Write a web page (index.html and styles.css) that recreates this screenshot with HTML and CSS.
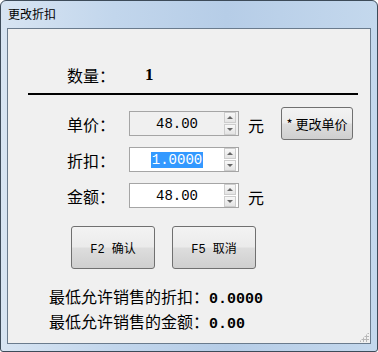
FILE: index.html
```
<!DOCTYPE html>
<html>

<head>
    <title>更改折扣</title>
    <link rel="stylesheet" href="styles.css">
</head>

<body>
    <div class="window">
        <div class="titlebar">更改折扣</div>
        <div class="client">
            <div class="qty-row">
                <span class="label">数量：</span>
                <span class="qty-value">1</span>
            </div>
            <div class="divider"></div>
            <div class="form-grid">
                <span class="label">单价：</span>
                <div class="spin-box disabled">
                    <span class="spin-text">48.00</span>
                    <div class="spin-buttons">
                        <span class="spin-btn up"></span>
                        <span class="spin-btn down"></span>
                    </div>
                </div>
                <span class="unit">元</span>
                <button class="btn change-price">* 更改单价</button>

                <span class="label">折扣：</span>
                <div class="spin-box">
                    <span class="spin-text"><span class="selected">1.0000</span></span>
                    <div class="spin-buttons">
                        <span class="spin-btn up"></span>
                        <span class="spin-btn down"></span>
                    </div>
                </div>
                <span class="unit"></span>
                <span></span>

                <span class="label">金额：</span>
                <div class="spin-box">
                    <span class="spin-text">48.00</span>
                    <div class="spin-buttons">
                        <span class="spin-btn up"></span>
                        <span class="spin-btn down"></span>
                    </div>
                </div>
                <span class="unit">元</span>
                <span></span>
            </div>
            <div class="actions">
                <button class="btn action"><span class="key">F2</span>确认</button>
                <button class="btn action"><span class="key">F5</span>取消</button>
            </div>
            <div class="limits">
                <div class="limit-row">最低允许销售的折扣：<span class="num">0.0000</span></div>
                <div class="limit-row">最低允许销售的金额：<span class="num">0.00</span></div>
            </div>
        </div>
    </div>
</body>

</html>
```

FILE: styles.css
```
body {
    margin: 0;
    width: 378px;
    height: 352px;
    overflow: hidden;
    background-color: #fff;
    font-family: "Noto Sans CJK SC", "Liberation Sans", sans-serif;
}

.window {
    box-sizing: border-box;
    height: 352px;
    border: 1px solid #3d4b59;
    border-radius: 6px 6px 3px 3px;
    display: flex;
    flex-direction: column;
    padding: 0 6px 7px 6px;
    background: linear-gradient(to right, #d7e4f2 0%, #c2d6ec 30%, #b6cde7 60%, #c4d8ed 100%);
}

.titlebar {
    height: 27px;
    line-height: 26px;
    padding-left: 1px;
    font-size: 12px;
    color: #000;
}

.client {
    flex: 1;
    border: 1px solid #6a7b8d;
    background-color: #f0f0f0;
    position: relative;
}

.client::after {
    /* resize grip */
    content: "";
    position: absolute;
    right: 1px;
    bottom: 1px;
    width: 10px;
    height: 10px;
    background: radial-gradient(circle, #b8b8b8 1px, transparent 1.2px) 0 0 / 3px 3px;
    clip-path: polygon(100% 0, 100% 100%, 0 100%);
}

.label {
    font-size: 16px;
    color: #000;
}

.qty-row {
    display: flex;
    align-items: center;
    height: 20px;
    margin-top: 36px;
    padding-left: 59px;
}

.qty-value {
    margin-left: 30px;
    font-family: "Liberation Serif", serif;
    font-weight: bold;
    font-size: 17px;
}

.divider {
    height: 2px;
    background-color: #000;
    margin: 8px 12px 0 20px;
}

.form-grid {
    display: grid;
    grid-template-columns: 62px 110px 42px 72px;
    grid-template-rows: 25px 25px 25px;
    row-gap: 11px;
    margin-top: 16px;
    padding-left: 59px;
    align-items: center;
}

.spin-box {
    box-sizing: border-box;
    height: 25px;
    border: 1px solid #a5a5a5;
    background-color: #fff;
    display: flex;
    align-items: center;
}

.spin-box.disabled {
    background-color: #f0f0f0;
}

.spin-text {
    flex: 1;
    text-align: center;
    font-family: "Liberation Mono", monospace;
    font-size: 14px;
    color: #000;
    line-height: 16px;
}

.selected {
    background-color: #3399ff;
    color: #fff;
    padding: 0 1px;
}

.spin-buttons {
    width: 12px;
    height: 23px;
    display: flex;
    flex-direction: column;
    gap: 1px;
    margin-right: 2px;
}

.spin-btn {
    flex: 1;
    box-sizing: border-box;
    border: 1px solid #cdcdcd;
    background: linear-gradient(#f8f8f8, #e4e4e4);
    position: relative;
}

.spin-btn::after {
    content: "";
    position: absolute;
    left: 2px;
    top: 3px;
    border-left: 3px solid transparent;
    border-right: 3px solid transparent;
}

.spin-btn.up::after {
    border-bottom: 3px solid #666;
}

.spin-btn.down::after {
    border-top: 3px solid #666;
}

.unit {
    padding-left: 9px;
    font-size: 16px;
    line-height: 25px;
    margin-top: 3px;
}

.btn {
    box-sizing: border-box;
    border: 1px solid #707070;
    border-radius: 3px;
    background: linear-gradient(#f3f3f3 0%, #ebebeb 48%, #dddddd 52%, #cfcfcf 100%);
    font-family: "Noto Sans CJK SC", sans-serif;
    color: #000;
    padding: 0;
    cursor: pointer;
}

.change-price {
    align-self: start;
    margin-top: -4px;
    width: 72px;
    height: 33px;
    font-size: 13px;
}

.actions {
    display: flex;
    gap: 17px;
    margin-top: 18px;
    padding-left: 63px;
}

.action {
    width: 84px;
    height: 43px;
    font-size: 12px;
}

.key {
    font-family: "Liberation Mono", monospace;
    font-size: 12px;
    margin-right: 7px;
}

.limits {
    margin-top: 15px;
    padding-left: 41px;
}

.limit-row {
    height: 25px;
    line-height: 25px;
    font-size: 16px;
}

.num {
    font-family: "Liberation Mono", monospace;
    font-weight: bold;
    font-size: 15px;
}
```
